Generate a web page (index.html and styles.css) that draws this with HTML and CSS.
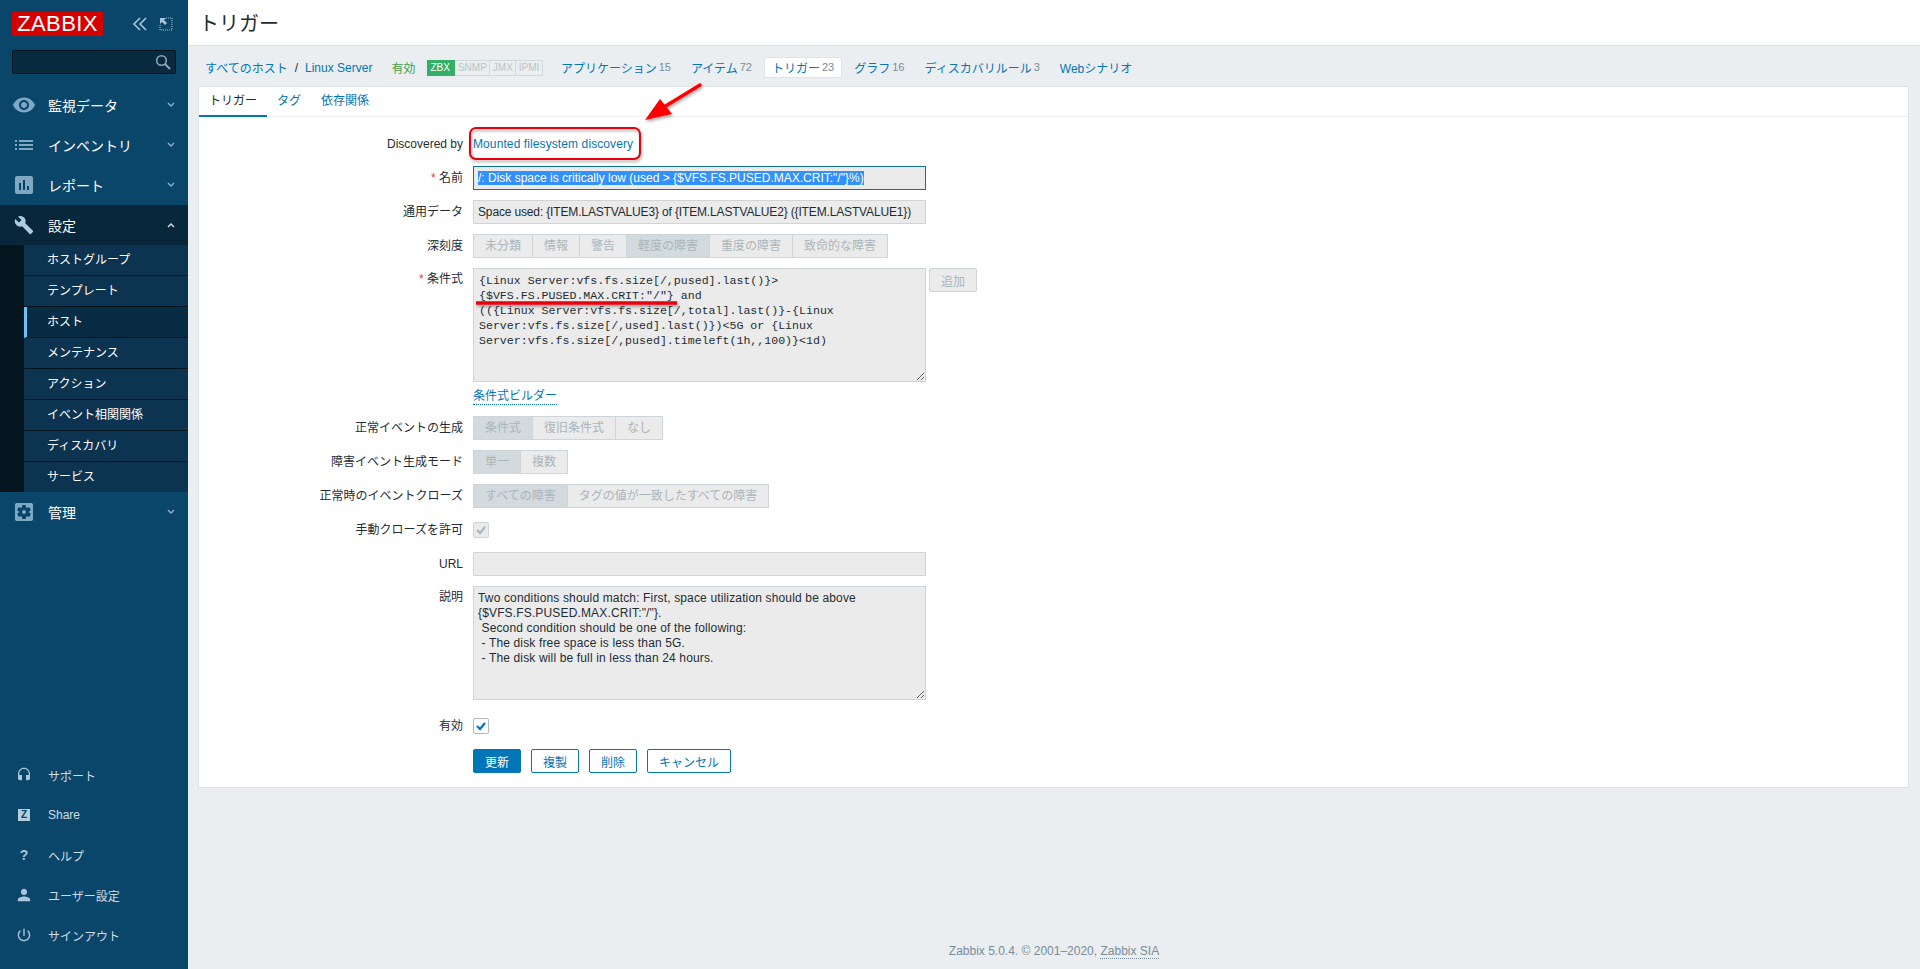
FILE: index.html
```html
<!DOCTYPE html>
<html lang="ja">
<head>
    <meta charset="UTF-8">
    <title>トリガー</title>
    <link rel="stylesheet" href="styles.css">
</head>
<body>

<aside class="sidebar">
    <div class="logo-row">
        <div class="logo">ZABBIX</div>
        <svg class="collapse-icon" width="16" height="14" viewBox="0 0 16 14"><path d="M8 1 2 7l6 6M14 1 8 7l6 6" fill="none" stroke="#a9c6d8" stroke-width="1.6"/></svg>
        <svg class="expand-icon" width="14" height="14" viewBox="0 0 14 14"><path d="M7 1h6v12H1V7" fill="none" stroke="#a9c6d8" stroke-dasharray="1 1"/><path d="M1 1h6L5 3l3 3-2 2-3-3-2 2z" fill="#a9c6d8"/></svg>
    </div>
    <div class="search-box">
        <svg width="16" height="16" viewBox="0 0 16 16"><circle cx="6.5" cy="6.5" r="4.8" fill="none" stroke="#8ba9bc" stroke-width="1.6"/><path d="m10 10 5 5" stroke="#8ba9bc" stroke-width="2"/></svg>
    </div>

    <ul class="menu">
        <li class="menu-item">
            <span class="menu-icon"><svg width="24" height="24" viewBox="0 0 24 24"><path d="M12 4.5C7 4.5 2.73 7.61 1 12c1.73 4.39 6 7.5 11 7.5s9.27-3.11 11-7.5c-1.73-4.39-6-7.5-11-7.5zM12 17c-2.76 0-5-2.24-5-5s2.24-5 5-5 5 2.24 5 5-2.24 5-5 5zm0-8c-1.66 0-3 1.34-3 3s1.34 3 3 3 3-1.34 3-3-1.34-3-3-3z"/></svg></span>
            <span class="menu-label">監視データ</span>
            <svg class="chevron" width="8" height="6" viewBox="0 0 8 6"><path d="m1 1 3 3 3-3" fill="none" stroke-width="1.4"/></svg>
        </li>
        <li class="menu-item">
            <span class="menu-icon"><svg width="24" height="24" viewBox="0 0 24 24"><path d="M3 13h2v-2H3v2zm0 4h2v-2H3v2zm0-8h2V7H3v2zm4 4h14v-2H7v2zm0 4h14v-2H7v2zM7 7v2h14V7H7z"/></svg></span>
            <span class="menu-label">インベントリ</span>
            <svg class="chevron" width="8" height="6" viewBox="0 0 8 6"><path d="m1 1 3 3 3-3" fill="none" stroke-width="1.4"/></svg>
        </li>
        <li class="menu-item">
            <span class="menu-icon"><svg width="24" height="24" viewBox="0 0 24 24"><path d="M19 3H5c-1.1 0-2 .9-2 2v14c0 1.1.9 2 2 2h14c1.1 0 2-.9 2-2V5c0-1.1-.9-2-2-2zM9 17H7v-7h2v7zm4 0h-2V7h2v10zm4 0h-2v-4h2v4z"/></svg></span>
            <span class="menu-label">レポート</span>
            <svg class="chevron" width="8" height="6" viewBox="0 0 8 6"><path d="m1 1 3 3 3-3" fill="none" stroke-width="1.4"/></svg>
        </li>
        <li class="menu-item open">
            <span class="menu-icon"><svg width="20" height="20" viewBox="0 0 24 24"><path d="M22.7 19l-9.1-9.1c.9-2.3.4-5-1.5-6.9-2-2-5-2.4-7.4-1.3L9 6 6 9 1.6 4.7C.4 7.1.9 10.1 2.9 12.1c1.9 1.9 4.6 2.4 6.9 1.5l9.1 9.1c.4.4 1 .4 1.4 0l2.3-2.3c.5-.4.5-1.1.1-1.4z"/></svg></span>
            <span class="menu-label">設定</span>
            <svg class="chevron" width="8" height="6" viewBox="0 0 8 6"><path d="m1 5 3-3 3 3" fill="none" stroke-width="1.4"/></svg>
        </li>
        <li class="submenu">
            <ul>
                <li>ホストグループ</li>
                <li>テンプレート</li>
                <li class="current">ホスト</li>
                <li>メンテナンス</li>
                <li>アクション</li>
                <li>イベント相関関係</li>
                <li>ディスカバリ</li>
                <li>サービス</li>
            </ul>
        </li>
        <li class="menu-item">
            <span class="menu-icon"><svg width="24" height="24" viewBox="0 0 24 24"><path d="M12 10c-1.1 0-2 .9-2 2s.9 2 2 2 2-.9 2-2-.9-2-2-2zm7-7H5c-1.11 0-2 .9-2 2v14c0 1.1.89 2 2 2h14c1.11 0 2-.9 2-2V5c0-1.1-.89-2-2-2zm-1.75 9c0 .23-.02.46-.05.68l1.48 1.16c.13.11.17.3.08.45l-1.4 2.42c-.09.15-.27.21-.43.15l-1.74-.7c-.36.28-.76.51-1.18.69l-.26 1.85c-.03.17-.18.3-.35.3h-2.8c-.17 0-.32-.13-.35-.29l-.26-1.85c-.43-.18-.82-.41-1.18-.69l-1.74.7c-.16.06-.34 0-.43-.15l-1.4-2.42c-.09-.15-.05-.34.08-.45l1.48-1.16c-.03-.23-.05-.46-.05-.69 0-.23.02-.46.05-.68l-1.48-1.16c-.13-.11-.17-.3-.08-.45l1.4-2.42c.09-.15.27-.21.43-.15l1.74.7c.36-.28.76-.51 1.18-.69l.26-1.85c.03-.17.18-.3.35-.3h2.8c.17 0 .32.13.35.29l.26 1.85c.43.18.82.41 1.18.69l1.74-.7c.16-.06.34 0 .43.15l1.4 2.42c.09.15.05.34-.08.45l-1.48 1.16c.03.23.05.46.05.69z"/></svg></span>
            <span class="menu-label">管理</span>
            <svg class="chevron" width="8" height="6" viewBox="0 0 8 6"><path d="m1 1 3 3 3-3" fill="none" stroke-width="1.4"/></svg>
        </li>
    </ul>

    <ul class="user-menu">
        <li class="menu-item">
            <span class="menu-icon"><svg width="16" height="16" viewBox="0 0 24 24"><path d="M12 1c-4.97 0-9 4.03-9 9v7c0 1.66 1.34 3 3 3h3v-8H5v-2c0-3.87 3.13-7 7-7s7 3.13 7 7v2h-4v8h3c1.66 0 3-1.34 3-3v-7c0-4.97-4.03-9-9-9z"/></svg></span>
            <span class="menu-label">サポート</span>
        </li>
        <li class="menu-item">
            <span class="menu-icon"><span class="share-icon">Z</span></span>
            <span class="menu-label">Share</span>
        </li>
        <li class="menu-item">
            <span class="menu-icon"><span class="help-icon">?</span></span>
            <span class="menu-label">ヘルプ</span>
        </li>
        <li class="menu-item">
            <span class="menu-icon"><svg width="14" height="14" viewBox="3 3 18 18"><path d="M12 12c2.21 0 4-1.79 4-4s-1.79-4-4-4-4 1.79-4 4 1.79 4 4 4zm0 2c-2.67 0-8 1.34-8 4v2h16v-2c0-2.66-5.33-4-8-4z"/></svg></span>
            <span class="menu-label">ユーザー設定</span>
        </li>
        <li class="menu-item">
            <span class="menu-icon"><svg width="14" height="14" viewBox="2 2 20 20"><path d="M13 3h-2v10h2V3zm4.83 2.17l-1.42 1.42C17.99 7.86 19 9.81 19 12c0 3.87-3.13 7-7 7s-7-3.13-7-7c0-2.19 1.01-4.14 2.58-5.42L6.17 5.17C4.23 6.82 3 9.26 3 12c0 4.97 4.03 9 9 9s9-4.03 9-9c0-2.74-1.23-5.18-3.17-6.83z"/></svg></span>
            <span class="menu-label">サインアウト</span>
        </li>
    </ul>
</aside>

<main class="content">
    <header class="page-header">
        <h1>トリガー</h1>
    </header>

    <nav class="host-nav">
        <a class="crumb">すべてのホスト</a>
        <span class="crumb-sep">/</span>
        <a class="crumb">Linux Server</a>
        <span class="host-status">有効</span>
        <div class="status-tags">
            <span class="tag on">ZBX</span><span class="tag">SNMP</span><span class="tag">JMX</span><span class="tag">IPMI</span>
        </div>
        <a class="nav-link">アプリケーション<sup>15</sup></a>
        <a class="nav-link">アイテム<sup>72</sup></a>
        <a class="nav-link current">トリガー<sup>23</sup></a>
        <a class="nav-link">グラフ<sup>16</sup></a>
        <a class="nav-link">ディスカバリルール<sup>3</sup></a>
        <a class="nav-link">Webシナリオ</a>
    </nav>

    <section class="panel">
        <div class="tabs">
            <a class="tab active">トリガー</a>
            <a class="tab">タグ</a>
            <a class="tab">依存関係</a>
        </div>

        <div class="form">
            <div class="form-row">
                <label>Discovered by</label>
                <div class="field plain"><a class="link wide">Mounted filesystem discovery</a></div>
            </div>
            <div class="form-row">
                <label><i>*</i> 名前</label>
                <div class="field"><div class="input focused"><span class="selected">/: Disk space is critically low (used &gt; {$VFS.FS.PUSED.MAX.CRIT:"/"}%)</span></div></div>
            </div>
            <div class="form-row">
                <label>通用データ</label>
                <div class="field"><div class="input tight">Space used: {ITEM.LASTVALUE3} of {ITEM.LASTVALUE2} ({ITEM.LASTVALUE1})</div></div>
            </div>
            <div class="form-row">
                <label>深刻度</label>
                <div class="field">
                    <div class="segments">
                        <span>未分類</span><span>情報</span><span>警告</span><span class="on">軽度の障害</span><span>重度の障害</span><span>致命的な障害</span>
                    </div>
                </div>
            </div>
            <div class="form-row">
                <label class="top"><i>*</i> 条件式</label>
                <div class="field expression-field">
                    <textarea class="area mono" readonly>{Linux Server:vfs.fs.size[/,pused].last()}&gt;
{$VFS.FS.PUSED.MAX.CRIT:"/"} and
(({Linux Server:vfs.fs.size[/,total].last()}-{Linux
Server:vfs.fs.size[/,used].last()})&lt;5G or {Linux
Server:vfs.fs.size[/,pused].timeleft(1h,,100)}&lt;1d)</textarea>
                    <button class="add-btn">追加</button>
                </div>
            </div>
            <div class="form-row builder-row">
                <label></label>
                <div class="field plain"><a class="link dotted">条件式ビルダー</a></div>
            </div>
            <div class="form-row">
                <label>正常イベントの生成</label>
                <div class="field">
                    <div class="segments">
                        <span class="on">条件式</span><span>復旧条件式</span><span>なし</span>
                    </div>
                </div>
            </div>
            <div class="form-row">
                <label>障害イベント生成モード</label>
                <div class="field">
                    <div class="segments">
                        <span class="on">単一</span><span>複数</span>
                    </div>
                </div>
            </div>
            <div class="form-row">
                <label>正常時のイベントクローズ</label>
                <div class="field">
                    <div class="segments">
                        <span class="on">すべての障害</span><span>タグの値が一致したすべての障害</span>
                    </div>
                </div>
            </div>
            <div class="form-row">
                <label>手動クローズを許可</label>
                <div class="field plain">
                    <span class="checkbox disabled"><svg width="12" height="12" viewBox="0 0 12 12"><path d="m2 6 3 3 5-6" fill="none" stroke="#a9b6bd" stroke-width="2.2"/></svg></span>
                </div>
            </div>
            <div class="form-row">
                <label>URL</label>
                <div class="field"><div class="input"></div></div>
            </div>
            <div class="form-row desc-row">
                <label class="top">説明</label>
                <div class="field">
                    <textarea class="area desc" readonly>Two conditions should match: First, space utilization should be above {$VFS.FS.PUSED.MAX.CRIT:"/"}.
 Second condition should be one of the following:
 - The disk free space is less than 5G.
 - The disk will be full in less than 24 hours.</textarea>
                </div>
            </div>
            <div class="form-row">
                <label>有効</label>
                <div class="field plain">
                    <span class="checkbox"><svg width="12" height="12" viewBox="0 0 12 12"><path d="m2 6 3 3 5-6" fill="none" stroke="#0275b8" stroke-width="2.2"/></svg></span>
                </div>
            </div>
            <div class="form-row buttons-row">
                <label></label>
                <div class="field buttons">
                    <button class="btn primary">更新</button>
                    <button class="btn">複製</button>
                    <button class="btn">削除</button>
                    <button class="btn">キャンセル</button>
                </div>
            </div>
        </div>
    </section>

    <footer class="page-footer">Zabbix 5.0.4. © 2001–2020, <a>Zabbix SIA</a></footer>
</main>

<!-- red marks drawn on top of the screenshot -->
<svg class="annotations" width="1920" height="969" viewBox="0 0 1920 969">
    <defs>
        <filter id="mark-shadow" x="-20%" y="-20%" width="140%" height="140%">
            <feDropShadow dx="1" dy="2" stdDeviation="1.5" flood-color="#000" flood-opacity="0.35"/>
        </filter>
    </defs>
    <g filter="url(#mark-shadow)">
        <rect x="470" y="128" width="170" height="31" rx="6" fill="none" stroke="#e8000e" stroke-width="2"/>
        <path d="M700 85 664 107" stroke="#f00" stroke-width="3.5" stroke-linecap="round"/>
        <path d="M645 120 660 99 672 114z" fill="#f00"/>
        <path d="M476 303H677" stroke="#e8000e" stroke-width="3.5"/>
    </g>
</svg>

</body>
</html>
```

FILE: styles.css
```css
* {
    box-sizing: border-box;
}
html, body {
    height: 100%;
}
body {
    margin: 0;
    display: flex;
    height: 969px;
    overflow: hidden;
    background: #ebeef0;
    color: #1f2c33;
    font-family: "Liberation Sans", "Noto Sans CJK JP", sans-serif;
    font-size: 12px;
}
ul {
    list-style: none;
    margin: 0;
    padding: 0;
}

/* sidebar */
.sidebar {
    width: 188px;
    flex-shrink: 0;
    display: flex;
    flex-direction: column;
    background: #0a466a;
    color: #fff;
}
.logo-row {
    display: flex;
    align-items: center;
    height: 24px;
    margin: 12px 0 0 12px;
}
.logo {
    width: 91px;
    height: 24px;
    background: #d40000;
    color: #fff;
    font-size: 22px;
    line-height: 24px;
    letter-spacing: 0.4px;
    text-align: center;
}
.collapse-icon {
    margin-left: 29px;
}
.expand-icon {
    margin-left: 11px;
}
.search-box {
    display: flex;
    align-items: center;
    justify-content: flex-end;
    height: 24px;
    margin: 14px 12px 11px;
    padding-right: 4px;
    background: #082a3e;
    border: 1px solid #03131c;
    border-radius: 2px;
}
.menu-item {
    display: flex;
    align-items: center;
    height: 40px;
    font-size: 14px;
}
.menu-icon {
    display: flex;
    align-items: center;
    justify-content: center;
    width: 48px;
    flex-shrink: 0;
}
.menu-icon svg {
    fill: #7fa8c3;
}
.menu-label {
    flex: 1;
}
.chevron {
    margin-right: 13px;
    stroke: #8fb0c6;
}
.menu-item.open {
    background: #08273b;
}
.menu-item.open .menu-icon svg {
    fill: #a9cde3;
}
.menu-item.open .chevron {
    stroke: #d5e3ec;
}
.submenu {
    padding-left: 24px;
    background: #04151f;
}
.submenu li {
    height: 31px;
    padding-left: 23px;
    line-height: 31px;
    background: #0c3350;
    border-bottom: 1px solid #04151f;
}
.submenu li:last-child {
    height: 30px;
    border-bottom: 0;
}
.submenu li.current {
    padding-left: 20px;
    background: #082c43;
    border-left: 3px solid #6ec0f5;
}
.user-menu {
    margin-top: auto;
    margin-bottom: 14px;
}
.user-menu .menu-item {
    font-size: 12px;
    color: #cfdde6;
}
.user-menu .menu-icon svg {
    fill: #a9c6d8;
}
.share-icon {
    width: 12px;
    height: 12px;
    background: #b5cddc;
    color: #0a466a;
    font-size: 10px;
    font-weight: bold;
    line-height: 12px;
    text-align: center;
}
.help-icon {
    color: #a9c6d8;
    font-size: 14px;
    font-weight: bold;
}

/* main area */
.content {
    flex: 1;
    min-width: 0;
    display: flex;
    flex-direction: column;
}
.page-header {
    display: flex;
    align-items: center;
    height: 46px;
    padding-left: 11px;
    background: #fff;
    border-bottom: 1px solid #dfe4e7;
}
h1 {
    margin: 0;
    font-size: 20px;
    font-weight: normal;
    color: #1f2c33;
}
.host-nav {
    display: flex;
    align-items: center;
    height: 40px;
    padding: 3px 0 0 17px;
    color: #0275b8;
}
.crumb-sep {
    margin: 0 7px;
    color: #1f2c33;
}
.host-status {
    margin-left: 19px;
    color: #429e47;
}
.status-tags {
    display: flex;
    margin: 0 10px 0 12px;
}
.tag {
    height: 16px;
    padding: 0 2.5px;
    font-size: 10px;
    line-height: 14px;
    color: #b8c3c9;
    background: #ebeef0;
    border: 1px solid #d2d9dd;
    border-left: 0;
}
.tag.on {
    width: 28px;
    padding: 0 3px;
    background: #34af67;
    border-color: #34af67;
    color: #fff;
}
.nav-link {
    display: flex;
    align-items: center;
    height: 21px;
    padding: 0 7px;
    margin-right: 4px;
    border: 1px solid transparent;
}
.nav-link.current {
    background: #fff;
    border-color: #dfe4e7;
    border-radius: 2px;
}
.nav-link sup {
    margin-left: 2px;
    color: #768d99;
    font-size: 11px;
    line-height: 1;
    vertical-align: baseline;
}

.panel {
    margin: 0 11px 0 10px;
    height: 702px;
    background: #fff;
    border: 1px solid #dfe4e7;
}
.tabs {
    display: flex;
    height: 30px;
    border-bottom: 1px solid #ebeef0;
}
.tab {
    padding: 0 10px;
    line-height: 28px;
    color: #0275b8;
}
.tab.active {
    height: 30px;
    color: #1f2c33;
    border-bottom: 2px solid #0275b8;
}

/* form */
.form {
    padding-top: 15px;
}
.form-row {
    display: flex;
    margin-bottom: 10px;
}
.form-row label {
    width: 264px;
    flex-shrink: 0;
    padding-top: 5px;
    line-height: 14px;
    text-align: right;
}
.form-row label.top {
    padding-top: 4px;
}
.form-row label i {
    color: #e33734;
    font-style: normal;
}
.field {
    margin-left: 10px;
    min-height: 24px;
}
.field.plain {
    display: flex;
    align-items: center;
}
.link {
    color: #0275b8;
}
.link.wide {
    letter-spacing: 0.1px;
}
.link.dotted {
    border-bottom: 1px dotted #0275b8;
    line-height: 15px;
}
.input {
    width: 453px;
    height: 24px;
    padding: 0 4px;
    line-height: 22px;
    background: #ebebeb;
    border: 1px solid #ccd5d9;
    white-space: nowrap;
    overflow: hidden;
}
.input.tight {
    letter-spacing: -0.15px;
}
.input.focused {
    border-color: #0f6ea8;
}
.selected {
    background: #3390ff;
    color: #fff;
}
.segments {
    display: flex;
}
.segments span {
    height: 24px;
    padding: 0 11px;
    margin-left: -1px;
    line-height: 22px;
    color: #aab5ba;
    background: #ebebeb;
    border: 1px solid #ccd5d9;
}
.segments span:first-child {
    margin-left: 0;
}
.segments span.on {
    background: #d2dade;
}
.expression-field {
    display: flex;
    align-items: flex-start;
}
.area {
    display: block;
    width: 453px;
    padding: 4px;
    color: #1f2c33;
    background: #ebebeb;
    border: 1px solid #ccd5d9;
    border-radius: 0;
    outline: none;
    resize: vertical;
}
.mono {
    height: 114px;
    padding-left: 5px;
    font-family: "Liberation Mono", monospace;
    font-size: 11.6px;
    line-height: 15px;
    white-space: pre;
    overflow: hidden;
}
.desc {
    height: 114px;
    font-family: "Liberation Sans", "Noto Sans CJK JP", sans-serif;
    font-size: 12px;
    letter-spacing: 0.15px;
    line-height: 15px;
    overflow: hidden;
}
.desc-row {
    margin-bottom: 14px;
}
.add-btn {
    width: 48px;
    height: 24px;
    margin-left: 3px;
    padding: 0;
    font: inherit;
    color: #aab5ba;
    background: #ebebeb;
    border: 1px solid #ccd5d9;
    border-radius: 2px;
}
.builder-row {
    margin-top: -5px;
}
.builder-row .field {
    min-height: 19px;
}
.buttons-row {
    margin-top: 11px;
}
.checkbox {
    display: flex;
    align-items: center;
    justify-content: center;
    width: 16px;
    height: 16px;
    background: #fff;
    border: 1px solid #acbbc2;
    border-radius: 2px;
}
.checkbox.disabled {
    background: #ebebeb;
    border-color: #ccd5d9;
}
.buttons {
    display: flex;
    gap: 10px;
}
.btn {
    height: 24px;
    padding: 0 11px;
    font: inherit;
    color: #0275b8;
    background: #fff;
    border: 1px solid #0275b8;
    border-radius: 2px;
}
.btn.primary {
    color: #fff;
    background: #0275b8;
}

.page-footer {
    margin-top: 156px;
    text-align: center;
    color: #768d99;
    line-height: 14px;
}
.page-footer a {
    border-bottom: 1px dotted #768d99;
}

.annotations {
    position: absolute;
    top: 0;
    left: 0;
    pointer-events: none;
}
```
